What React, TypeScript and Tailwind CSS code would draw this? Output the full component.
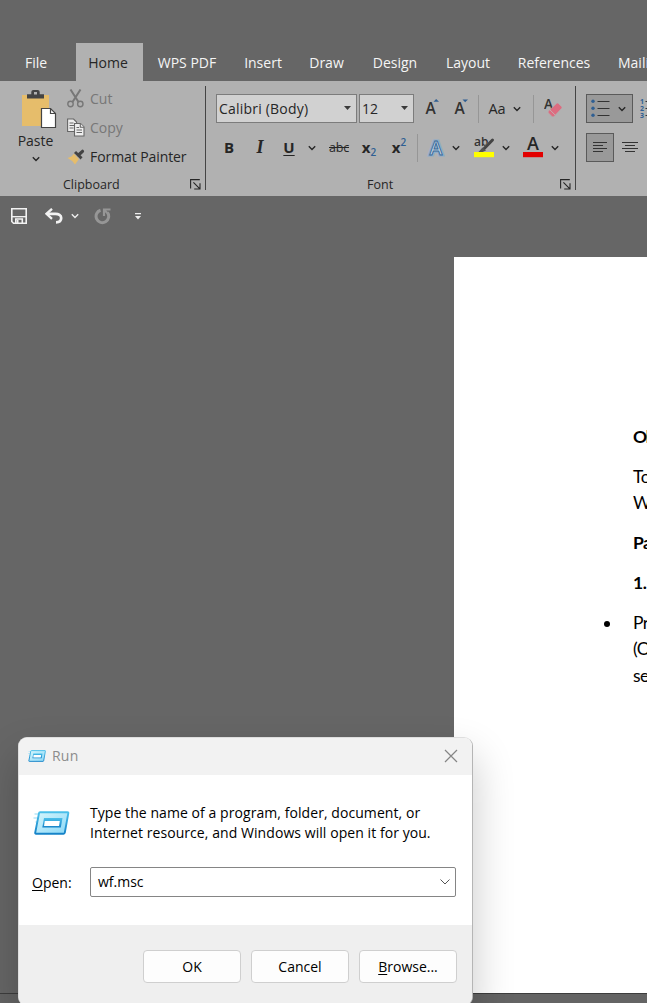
import React from "react";

const Chevron = ({ color = "#262626" }: { color?: string }) => (
  <svg width="8" height="6" viewBox="0 0 8 6" className="shrink-0" fill="none" stroke={color} strokeWidth="1.4">
    <path d="M0.8 1.2 4 4.4 7.2 1.2" />
  </svg>
);

const Triangle = () => (
  <svg width="7" height="4" viewBox="0 0 7 4" className="mb-px shrink-0">
    <path d="M0 0h7L3.5 4z" fill="#3a3a3a" />
  </svg>
);

const Launcher = () => (
  <svg width="11" height="11" viewBox="0 0 11 11" fill="none" stroke="#262626" strokeWidth="1.1">
    <path d="M0.6 9.5V0.6H9.8M3.4 3.4 9.4 9.4M10 4.2V10H4.2" />
  </svg>
);

const PasteIcon = () => (
  <svg width="36" height="40" viewBox="0 0 36 40">
    <path d="M1 5h27v31H1z" fill="#e6bd6b" />
    <path d="M6 8.5V4.2h4.3V2q0-2 2-2h4.4q2 0 2 2v2.200H23v4.300z" fill="#444" />
    <rect x="13" y="2" width="3" height="2.500" fill="#b1b1b1" />
    <path d="M20.500 18.500h9l5 5v14h-14z" fill="#fff" stroke="#444" strokeWidth="1.200" />
    <path d="M29.500 18.500v5h5" fill="none" stroke="#444" strokeWidth="1.200" />
  </svg>
);

const CutIcon = () => (
  <svg width="17" height="19" viewBox="0 0 17 19" fill="none" stroke="#777">
    <path d="M3.500 0.500 11.500 13M13.500 0.500 5.500 13" strokeWidth="2" />
    <circle cx="3.500" cy="15" r="2.700" strokeWidth="1.400" />
    <circle cx="13.300" cy="15" r="2.700" strokeWidth="1.400" />
  </svg>
);

const CopyIcon = () => (
  <svg width="18" height="19" viewBox="0 0 18 19" fill="#eee" stroke="#666" strokeWidth="1.100">
    <path d="M0.600 1h6l3 3v9.500h-9z" />
    <path d="M2.500 5h4M2.500 7.500h5M2.500 10h4" />
    <path d="M7.500 5.500h6l3.500 3.500v9H7.500z" />
    <path d="M13.300 5.500v3.700H17M9.500 9.500h2.500M9.500 12h5.500M9.500 14.500h5.500" />
  </svg>
);

const PainterIcon = () => (
  <svg width="18" height="16" viewBox="0 0 18 16">
    <path d="M7 4.500 12 10 8 15.500Q5 11 0.500 9 5 8 7 4.500z" fill="#e6bd6b" />
    <path d="M8 3 14.500 9.300" stroke="#444" strokeWidth="3" />
    <path d="M11.500 6 15.500 2.300" stroke="#444" strokeWidth="3.200" strokeLinecap="round" />
    <path d="M7 4.500 12.500 10" stroke="#b1b1b1" strokeWidth="0.700" />
  </svg>
);

const EraserIcon = () => (
  <svg width="19" height="21" viewBox="0 0 19 21">
    <text x="0" y="11" fontSize="13.500" fontFamily="Open Sans, sans-serif" fontWeight="600" fill="#333">A</text>
    <path d="M12.500 5.500q1-1 2 0l3 3q1 1 0 2L10 18.500q-1 1-2 0L4.500 15q-1-1 0-2z" fill="#dc6c80" stroke="#b1b1b1" strokeWidth="0.600" />
    <path d="m5.600 11.500 5.600 5.600" stroke="#c5b0b3" strokeWidth="0.900" />
  </svg>
);

const HighlightIcon = () => (
  <svg width="22" height="22" viewBox="0 0 22 22">
    <text x="1" y="9" fontSize="12" fontFamily="Open Sans, sans-serif" fontWeight="600" fill="#333">ab</text>
    <path d="m20 3.500-9 9" stroke="#b1b1b1" strokeWidth="4.500" />
    <path d="m19.500 3-8.500 8.700" stroke="#444" strokeWidth="3" strokeLinecap="round" />
    <path d="m9.500 10.500 3.500 3-4.500 2H5z" fill="#555" />
    <rect x="1" y="15" width="20" height="5.200" fill="#ff0" />
  </svg>
);

const FontColorIcon = () => (
  <svg width="22" height="22" viewBox="0 0 22 22">
    <text x="11" y="12.500" textAnchor="middle" fontSize="18" fontFamily="Open Sans, sans-serif" fontWeight="600" fill="#262626">A</text>
    <rect x="1" y="15" width="20" height="5.200" fill="#e20000" />
  </svg>
);

const EffectsIcon = () => (
  <svg width="18" height="20" viewBox="0 0 18 20">
    <text x="9" y="16.500" textAnchor="middle" fontSize="19.500" fontFamily="Open Sans, sans-serif" fontWeight="700" fill="#7fa3c6" stroke="#8fadc9" strokeWidth="3">A</text>
    <text x="9" y="16.500" textAnchor="middle" fontSize="19.500" fontFamily="Open Sans, sans-serif" fontWeight="600" fill="#c6d6e4" stroke="#376898" strokeWidth="0.900">A</text>
  </svg>
);

const SizeIcon = ({ up }: { up?: boolean }) => (
  <svg width="16" height="19" viewBox="0 0 16 19">
    <text x="0.500" y="15" fontSize="15.500" fontFamily="Open Sans, sans-serif" fontWeight="600" fill="#333">A</text>
    <path d={up ? "M8.500 2.800h5.500L11.200 0.100z" : "M8.500 0.500h5.500L11.200 3.200z"} fill="#2f5f93" />
  </svg>
);

const BulletsIcon = () => (
  <svg width="19" height="19" viewBox="0 0 19 19">
    <g fill="#2f5f93"><circle cx="2" cy="2.200" r="1.700" /><circle cx="2" cy="9.200" r="1.700" /><circle cx="2" cy="16.200" r="1.700" /></g>
    <path d="M6.500 2.500h12M6.500 9.500h12M6.500 16.500h12" stroke="#333" />
  </svg>
);

const NumberingIcon = () => (
  <svg width="19" height="21" viewBox="0 0 19 21" className="shrink-0">
    <g fontSize="7" fontWeight="700" fontFamily="Open Sans, sans-serif" fill="#2f5f93">
      <text x="0" y="5.500">1</text><text x="0" y="12.500">2</text><text x="0" y="19.500">3</text>
    </g>
    <path d="M5.500 3.500h12M5.500 10.500h12M5.500 17.500h12" stroke="#333" />
  </svg>
);

const RunIcon = ({ width, height, id }: { width: number; height: number; id: string }) => (
  <svg width={width} height={height} viewBox="0 0 36 24">
    <defs>
      <linearGradient id={id} x1="0" y1="0" x2="0" y2="1">
        <stop offset="0" stopColor="#4cc0ea" /><stop offset="1" stopColor="#1683c8" />
      </linearGradient>
      <linearGradient id={id + "-face"} x1="0" y1="0" x2="1" y2="1">
        <stop offset="0" stopColor="#d7f6fc" /><stop offset="1" stopColor="#8ad8f7" />
      </linearGradient>
    </defs>
    <path d="M1 3h7M0 7h6M2 11h4" stroke="#b8e6f7" strokeWidth="1.600" />
    <path d="M6.500 1.200h27.500q1 0 .8 1l-3.500 19.500q-.2 1-1.200 1H2.500q-1 0-.8-1l3.800-19.500q.2-1 1-1z" fill={`url(#${id}-face)`} stroke={`url(#${id})`} strokeWidth="1.900" />
    <path d="M10.500 7h18.500l-1.700 9.500H8.800z" fill={`url(#${id})`} />
    <path d="M11.300 10h15l-.8 5H10.500z" fill="#fff" />
  </svg>
);

const SaveIcon = () => (
  <svg width="16" height="16" viewBox="0 0 16 16" fill="none" stroke="#f2f2f2">
    <path d="M.8.800h14.400v14.400H2.500L.8 13.500z" strokeWidth="1.600" />
    <path d="M1 8.700h14" strokeWidth="1.400" />
    <path d="M4.800 15v-4h6.500v4M6.700 12v3" strokeWidth="1.600" />
  </svg>
);

const UndoIcon = () => (
  <svg width="18" height="16" viewBox="0 0 18 16" fill="none" stroke="#f2f2f2">
    <path d="M7 .8 1.500 5.800 7 10.800" strokeWidth="2.300" />
    <path d="M2 5.800h8.500c3 0 5.700 1.500 5.700 4.200S14 14.300 11 14.300" strokeWidth="2.700" />
  </svg>
);

const RedoIcon = () => (
  <svg width="17" height="17" viewBox="0 0 17 17" fill="none" stroke="#969696">
    <path d="M6.500 2.300A6.300 6.300 0 1 0 13.400 4.500" strokeWidth="3" />
    <path d="M10 8V1.500H16.500M10 2l3.500 3" strokeWidth="2.200" />
  </svg>
);

const Sep = ({ className = "" }: { className?: string }) => (
  <div className={`h-7 w-px shrink-0 bg-[#969696] ${className}`} />
);

const Cell = ({ className, children }: { className: string; children: React.ReactNode }) => (
  <div className={`flex shrink-0 items-center justify-center whitespace-nowrap ${className}`}>{children}</div>
);

const tabs = [
  { name: "WPS PDF", box: "w-[88px]" },
  { name: "Insert", box: "w-[64px]" },
  { name: "Draw", box: "w-[63px]" },
  { name: "Design", box: "w-[74px]" },
  { name: "Layout", box: "w-[72px]" },
  { name: "References", box: "w-[100px]" },
];

function Ribbon() {
  return (
    <div className="flex h-[115px] shrink-0 bg-[#b1b1b1] text-[14px] text-[#262626]">
      <section className="flex w-[206px] shrink-0">
        <div className="flex w-[205px] flex-col">
          <div className="flex h-[91px]">
            <div className="flex w-[67px] flex-col items-center pl-[4px] pt-[9px]">
              <div className="pl-[7px]"><PasteIcon /></div>
              <span className="mt-px leading-5">Paste</span>
              <span className="mt-[5px] flex"><Chevron /></span>
            </div>
            <div className="flex flex-col pt-[3px]">
              <div className="flex h-[29px] items-center text-[#777]"><span className="w-[23px]"><CutIcon /></span>Cut</div>
              <div className="flex h-[29px] items-center text-[#777]"><span className="w-[23px]"><CopyIcon /></span>Copy</div>
              <div className="flex h-[29px] items-center whitespace-nowrap tracking-[-0.08px]"><span className="w-[23px]"><PainterIcon /></span>Format Painter</div>
            </div>
          </div>
          <div className="flex h-[24px] items-end justify-between pl-[63px] pr-[4px] text-[12.500px] leading-[22px]">Clipboard<span className="pb-[6px]"><Launcher /></span></div>
        </div>
        <div className="mt-[5px] h-[104px] w-px bg-[#444]" />
      </section>
      <section className="flex w-[370px] shrink-0">
        <div className="flex w-[369px] flex-col">
          <div className="flex h-[91px] flex-col pl-[10px] pt-[13px]">
            <div className="flex h-[29px] items-center">
              <div className="flex h-[29px] w-[141px] items-center justify-between border border-[#7c7c7c] bg-[#d1d1d1] pl-[2px] pr-[5px] tracking-[0.2px]">Calibri (Body)<Triangle /></div>
              <div className="ml-[2px] flex h-[29px] w-[55px] items-center justify-between border border-[#7c7c7c] bg-[#d1d1d1] pl-[2px] pr-[5px]">12<Triangle /></div>
              <Cell className="w-[34px] pl-[4px]"><SizeIcon up /></Cell>
              <Cell className="w-[25px] pl-[3px]"><SizeIcon /></Cell>
              <Sep className="ml-[5px]" />
              <Cell className="w-[30px] pl-[6px] text-[14.500px] font-medium">Aa</Cell>
              <Cell className="w-[12px] pl-1"><Chevron /></Cell>
              <Sep className="ml-[12px]" />
              <Cell className="ml-[10px] w-[19px]"><EraserIcon /></Cell>
            </div>
            <div className="mt-[10px] flex h-[29px] items-center">
              <Cell className="w-[26px] text-[15px] font-bold">B</Cell>
              <Cell className="w-[36px] font-['Liberation_Serif',serif] text-[18px] font-bold italic">I</Cell>
              <Cell className="w-[22px] text-[15px] font-bold underline underline-offset-2">U</Cell>
              <Cell className="w-[24px]"><Chevron /></Cell>
              <Cell className="w-[30px] pt-[2px] text-[12.500px] tracking-[-0.2px] line-through">abc</Cell>
              <Cell className="w-[30px] text-[15px] font-bold">x<span className="pt-[8px] text-[10px] font-semibold leading-none text-[#2f5f93]">2</span></Cell>
              <Cell className="w-[30px] text-[15px] font-bold">x<span className="pb-[11px] text-[10px] font-semibold leading-none text-[#2f5f93]">2</span></Cell>
              <Sep className="ml-[3px]" />
              <Cell className="w-[35px]"><EffectsIcon /></Cell>
              <Cell className="w-[6px]"><Chevron /></Cell>
              <Cell className="ml-[7px] w-[36px]"><HighlightIcon /></Cell>
              <Cell className="w-[8px]"><Chevron /></Cell>
              <Cell className="ml-[5px] w-[36px]"><FontColorIcon /></Cell>
              <Cell className="w-[8px]"><Chevron /></Cell>
            </div>
          </div>
          <div className="flex h-[24px] items-end justify-between pl-[161px] pr-[4px] text-[12.500px] leading-[22px]">Font<span className="pb-[6px]"><Launcher /></span></div>
        </div>
        <div className="mt-[5px] h-[104px] w-px bg-[#444]" />
      </section>
      <section className="flex flex-col pl-[10px] pt-[13px]">
        <div className="flex items-center">
          <div className="flex h-[29px] w-[47px] shrink-0 items-center justify-between border border-[#5a5a5a] bg-[#999] pl-1 pr-[6px]"><BulletsIcon /><Chevron /></div>
          <div className="ml-[7px]"><NumberingIcon /></div>
        </div>
        <div className="mt-[10px] flex items-center">
          <Cell className="h-[29px] w-[28px] border border-[#5a5a5a] bg-[#999]">
            <svg width="14" height="11" viewBox="0 0 14 11" stroke="#333"><path d="M0 .5h14M0 3.500h10M0 6.500h14M0 9.500h10" /></svg>
          </Cell>
          <svg className="ml-2 shrink-0" width="16" height="11" viewBox="0 0 16 11" stroke="#333"><path d="M0 .5h16M3 3.500h10M0 6.500h16M3 9.500h10" /></svg>
        </div>
      </section>
    </div>
  );
}

function DocumentPage() {
  return (
    <main className="mt-[21px] ml-[454px] h-[736px] w-[400px] shrink-0 bg-white pl-[179px] pt-[167px] font-[Lato,sans-serif] text-[17.500px] leading-[26.700px] tracking-[-0.5px] text-black">
      <div className="whitespace-nowrap">
        <p className="font-bold tracking-[-1.2px]">Objective</p>
        <p className="mt-[13px]">To<br />Windows</p>
        <p className="mt-[13px] font-bold">Part</p>
        <p className="mt-[13px] font-bold">1.</p>
        <div className="-ml-[29px] mt-[13px] flex">
          <span className="mt-[11px] mr-[23px] h-[6px] w-[6px] shrink-0 rounded-full bg-black" />
          <p>Press<br />(Open<br />search</p>
        </div>
      </div>
    </main>
  );
}

const dialogButton = "flex h-[33px] w-[98px] items-center justify-center rounded-[4px] border border-[#cfcfcf] bg-[#fdfdfd]";

function RunDialog() {
  return (
    <div className="absolute left-[18px] top-[737px] flex h-[269px] w-[455px] flex-col overflow-hidden rounded-[9px] border border-[#b5b5b5] border-l-[#dedede] border-t-[#dedede] bg-white text-[14px] text-black shadow-[0_20px_40px_2px_rgba(0,0,0,0.2)]">
      <header className="flex h-[37px] shrink-0 items-center bg-[#f2f2f2] pb-[2px] pl-[9px] pr-[14px] text-[#8c8c8c]">
        <RunIcon width={18} height={12} id="run-small" />
        <span className="ml-[6px] flex-1 tracking-[0.2px]">Run</span>
        <svg width="14" height="14" viewBox="0 0 14 14" stroke="#858585" strokeWidth="1.200"><path d="m1 1 12 12M13 1 1 13" /></svg>
      </header>
      <div className="flex h-[150px] shrink-0 flex-col">
        <div className="flex pl-[14px] pt-[28px]">
          <div className="pt-[8px]"><RunIcon width={37} height={24} id="run-large" /></div>
          <p className="ml-[20px] whitespace-nowrap leading-5 tracking-[0.065px]">Type the name of a program, folder, document, or<br />Internet resource, and Windows will open it for you.</p>
        </div>
        <div className="mt-[24px] flex items-center pl-[13px]">
          <span className="w-[58px]"><span className="underline underline-offset-2">O</span>pen:</span>
          <div className="flex h-[30px] w-[366px] items-center justify-between rounded-[2px] border border-[#858585] pb-[2px] pl-[7px] pr-[5px]">
            <span>wf.msc</span>
            <svg className="mt-[2px]" width="10" height="6" viewBox="0 0 10 6" fill="none" stroke="#555"><path d="m.5.5 4.500 4.500L9.500.5" /></svg>
          </div>
        </div>
      </div>
      <footer className="flex flex-1 gap-[10px] bg-[#efefef] pl-[124px] pt-[25px]">
        <div className={dialogButton}>OK</div>
        <div className={dialogButton}>Cancel</div>
        <div className={dialogButton}><span className="underline underline-offset-2">B</span>rowse...</div>
      </footer>
    </div>
  );
}

export default function App() {
  return (
    <div className="relative flex h-[1003px] w-[647px] flex-col overflow-hidden bg-[#666] font-['Open_Sans',sans-serif]">
      <nav className="flex h-[81px] shrink-0 items-end text-[14px] text-[#f5f5f5]">
        <Cell className="h-[38px] w-[76px] pr-[4px]">File</Cell>
        <Cell className="h-[38px] w-[67px] bg-[#b1b1b1] pr-[3px] text-[#262626]">Home</Cell>
        {tabs.map((t) => <Cell key={t.name} className={`h-[38px] ${t.box}`}>{t.name}</Cell>)}
        <div className="flex h-[38px] items-center pl-[14px]">Mailings</div>
      </nav>
      <Ribbon />
      <div className="flex h-10 shrink-0 items-center pl-[11px]">
        <SaveIcon />
        <span className="ml-[18px]"><UndoIcon /></span>
        <span className="ml-[8px]"><Chevron color="#eee" /></span>
        <span className="ml-[15px]"><RedoIcon /></span>
        <svg className="ml-[24px]" width="6" height="7" viewBox="0 0 6 7" fill="#eee"><path d="M0 0h6v1.300H0zM0 3h6L3 6.500z" /></svg>
      </div>
      <DocumentPage />
      <div className="flex h-[10px] shrink-0 border-t border-[#3d3d3d] bg-[#646464]" />
      <RunDialog />
    </div>
  );
}
